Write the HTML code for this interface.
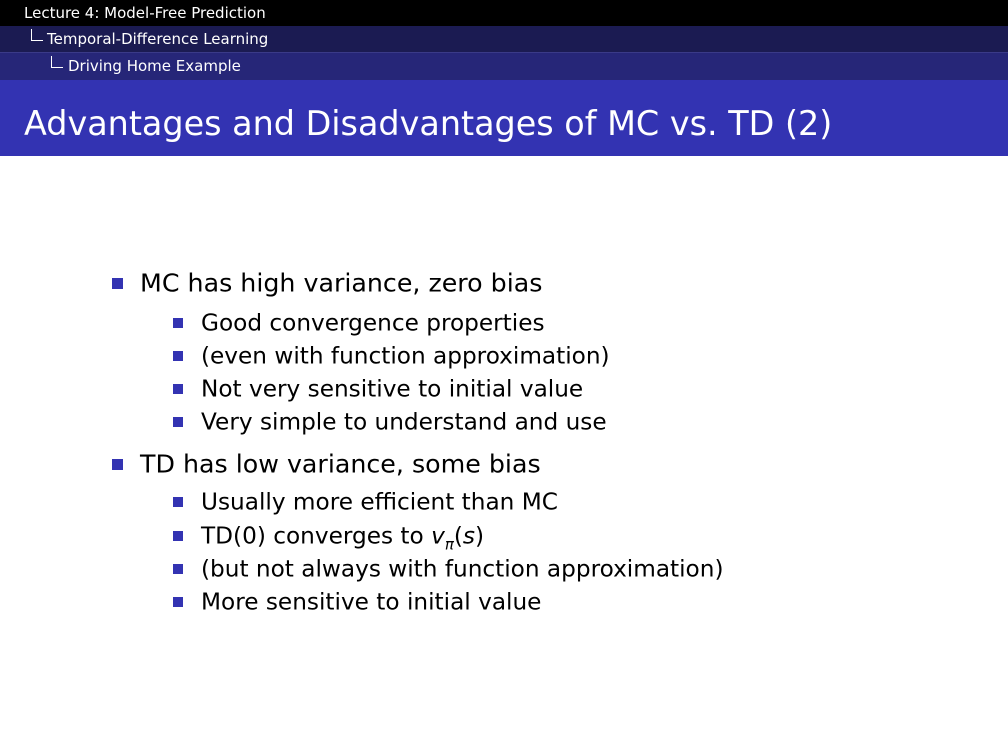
<!DOCTYPE html><html><head><style>
body{margin:0;width:1008px;height:756px;background:#fff;font-family:"DejaVu Sans","Liberation Sans",sans-serif;position:relative;overflow:hidden}
.b{position:absolute;left:0;width:1008px;color:#fff;font-size:15px;line-height:26px;box-sizing:border-box;white-space:nowrap}
.c{position:absolute;border-left:1.5px solid #fff;border-bottom:1.5px solid #fff;width:11px;height:11px}
.t{position:absolute;left:0;top:80px;width:1008px;height:76px;background:#3333b2;color:#fff;font-size:33.4px;line-height:88px;box-sizing:border-box;padding-left:24px}
.l{position:absolute;white-space:nowrap;color:#000;transform:translateY(-50%)}
.l1{left:140px;font-size:25.3px}
.l2{left:201px;font-size:23.2px}
.s{position:absolute;background:#3333b2}
</style></head><body>
<div class="b" style="top:0;height:26px;background:#000;padding-left:24px">Lecture 4: Model-Free Prediction</div>
<div class="b" style="top:26px;height:27px;background:#1b1b52;padding-left:47px;border-bottom:1px solid #3a3a88">Temporal-Difference Learning</div>
<div class="c" style="left:31px;top:29px"></div>
<div class="b" style="top:53px;height:27px;background:#262678;padding-left:68px">Driving Home Example</div>
<div class="c" style="left:51px;top:56px"></div>
<div class="t">Advantages and Disadvantages of MC vs. TD (2)</div>

<div class="s" style="left:112px;top:278px;width:11px;height:11px"></div><div class="l l1" style="top:283px">MC has high variance, zero bias</div>
<div class="s" style="left:173px;top:318px;width:10px;height:10px"></div><div class="l l2" style="top:323px">Good convergence properties</div>
<div class="s" style="left:173px;top:351px;width:10px;height:10px"></div><div class="l l2" style="top:356px">(even with function approximation)</div>
<div class="s" style="left:173px;top:384px;width:10px;height:10px"></div><div class="l l2" style="top:389px">Not very sensitive to initial value</div>
<div class="s" style="left:173px;top:417px;width:10px;height:10px"></div><div class="l l2" style="top:422px">Very simple to understand and use</div>
<div class="s" style="left:112px;top:459px;width:11px;height:11px"></div><div class="l l1" style="top:464px">TD has low variance, some bias</div>
<div class="s" style="left:173px;top:497px;width:10px;height:10px"></div><div class="l l2" style="top:502px">Usually more efficient than MC</div>
<div class="s" style="left:173px;top:531px;width:10px;height:10px"></div><div class="l l2" style="top:538px">TD(0) converges to <i>v</i><sub style="font-size:15px"><i>π</i></sub>(<i>s</i>)</div>
<div class="s" style="left:173px;top:564px;width:10px;height:10px"></div><div class="l l2" style="top:569px">(but not always with function approximation)</div>
<div class="s" style="left:173px;top:597px;width:10px;height:10px"></div><div class="l l2" style="top:602px">More sensitive to initial value</div>
</body></html>
